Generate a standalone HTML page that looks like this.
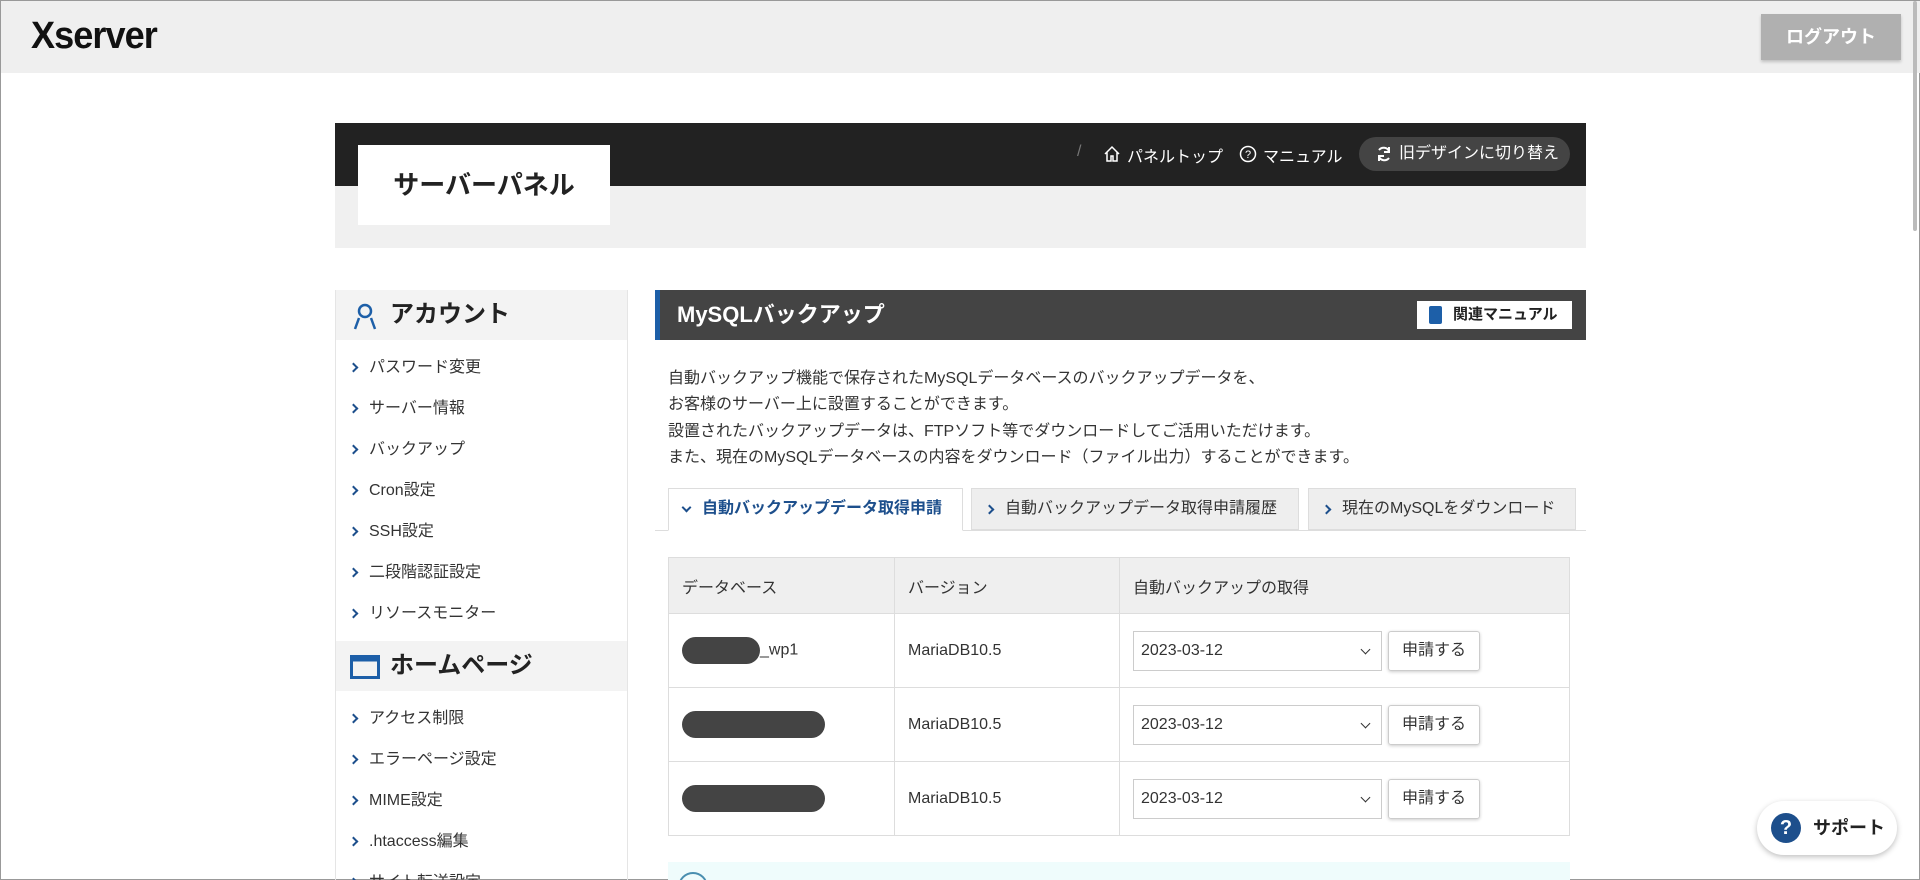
<!DOCTYPE html>
<html style="width:1920px;height:880px;overflow:hidden"><head><meta charset="utf-8"><style>
*{box-sizing:border-box;margin:0;padding:0}
body{width:1920px;height:880px;overflow:hidden;background:#fff;font-family:"Liberation Sans","Noto Sans CJK JP",sans-serif;color:#333;position:relative;border:1px solid #999}
.abs{position:absolute}
#hdr{left:0;top:0;width:1920px;height:72px;background:#efefef}
#logo{left:30px;top:14px;font-size:38px;font-weight:bold;color:#111;letter-spacing:-1px;transform:scaleX(0.95);transform-origin:left}
#logout{left:1760px;top:13px;width:140px;height:46px;background:#b0b0b0;color:#fff;font-size:18px;font-weight:bold;text-align:center;line-height:46px;box-shadow:0 2px 3px rgba(0,0,0,.2)}
#sb{left:1912px;top:0;width:4px;height:230px;background:#bbb;border-radius:2px}
#dark{left:334px;top:122px;width:1251px;height:63px;background:#222}
#light{left:334px;top:185px;width:1251px;height:62px;background:#f0f0f0}
#pbox{left:357px;top:144px;width:252px;height:80px;background:#fff;font-size:26px;font-weight:bold;color:#222;text-align:center;line-height:80px}
.nav{color:#fff;font-size:16px;top:142px}
#pill{left:1358px;top:136px;width:211px;height:34px;background:#444;border-radius:17px;color:#fff;font-size:16px;line-height:34px;padding-left:40px}
#side{left:334px;top:289px;width:293px;height:600px;border:1px solid #e5e5e5;border-top:none}
.sh{height:50px;background:#f3f3f3;font-size:24px;font-weight:bold;color:#222;line-height:50px;padding-left:54px;position:relative}
.si{height:41px;font-size:16px;line-height:41px;padding-left:33px;position:relative;color:#333}
.si:before,.tab:before{content:"";position:absolute;left:14px;top:17px;width:5px;height:5px;border-right:2px solid #1d4f8c;border-top:2px solid #1d4f8c;transform:rotate(45deg)}
#title{left:654px;top:289px;width:931px;height:50px;background:#444;border-left:5px solid #1d5fa8;color:#fff;font-size:22px;font-weight:bold;line-height:50px;padding-left:17px}
#rel{left:1416px;top:300px;width:155px;height:28px;background:#fff;color:#222;font-size:15px;font-weight:bold;line-height:28px;padding-left:36px}
#para{left:667px;top:365px;font-size:16px;line-height:26.4px;color:#333}
.tab{top:487px;height:42px;font-size:16px;line-height:40px;padding-left:33px;border:1px solid #ddd;background:#eee;position:absolute}
.tab.act:before{transform:rotate(135deg);top:15px}
#tabline{left:654px;top:529px;width:931px;height:1px;background:#ddd}
table{position:absolute;left:667px;top:556px;width:902px;border-collapse:collapse;font-size:16px}
td,th{border:1px solid #ddd;text-align:left;font-weight:normal;padding-left:13px}
th{background:#efefef;height:56px}
td{height:74px}
.sel{display:inline-block;width:249px;height:40px;border:1px solid #ccc;line-height:38px;padding-left:7px;position:relative;vertical-align:middle}
.sel:after{content:"";position:absolute;right:12px;top:14px;width:6px;height:6px;border-right:1.5px solid #333;border-bottom:1.5px solid #333;transform:rotate(45deg)}
.btn{display:inline-block;width:92px;height:40px;border:1px solid #ccc;border-radius:3px;text-align:center;line-height:38px;margin-left:6px;vertical-align:middle;box-shadow:0 1px 3px rgba(0,0,0,.2)}
.blob{display:inline-block;background:#444;border-radius:14px;height:27px;vertical-align:middle}
#info{left:667px;top:861px;width:902px;height:30px;background:#effcfc}
#sup{left:1756px;top:800px;width:140px;height:54px;background:#fff;border-radius:27px;box-shadow:0 2px 6px rgba(0,0,0,.25);font-size:18px;font-weight:bold;color:#222;line-height:54px;padding-left:56px}
#sup i{position:absolute;left:14px;top:12px;width:30px;height:30px;border-radius:50%;background:#1d4f8c;color:#fff;font-style:normal;text-align:center;line-height:30px;font-size:20px;padding:0}
</style></head><body>
<div id="hdr" class="abs"></div>
<div id="logo" class="abs">Xserver</div>
<div id="logout" class="abs">ログアウト</div>
<div id="sb" class="abs"></div>
<div id="dark" class="abs"></div>
<div id="light" class="abs"></div>
<div id="pbox" class="abs">サーバーパネル</div>
<div class="abs nav" style="left:1076px;color:#777">/</div>
<svg class="abs" style="left:1102px;top:144px" width="18" height="18" viewBox="0 0 18 18"><path d="M2 9L9 2l7 7M4 7v9h4v-5h2v5h4V7" fill="none" stroke="#fff" stroke-width="1.5"/></svg>
<div class="abs nav" style="left:1126px">パネルトップ</div>
<svg class="abs" style="left:1238px;top:144px" width="18" height="18" viewBox="0 0 18 18"><circle cx="9" cy="9" r="7.5" fill="none" stroke="#fff" stroke-width="1.5"/><text x="9" y="13" font-size="11" fill="#fff" text-anchor="middle" font-family="Liberation Sans">?</text></svg>
<div class="abs nav" style="left:1262px">マニュアル</div>
<div id="pill" class="abs">旧デザインに切り替え</div>
<svg class="abs" style="left:1374px;top:143px" width="18" height="20" viewBox="0 0 18 20"><path d="M4 6a6 6 0 0 1 10 1M14 14a6 6 0 0 1-10-1" fill="none" stroke="#fff" stroke-width="2"/><path d="M14 3v5h-5M4 17v-5h5" fill="none" stroke="#fff" stroke-width="2"/></svg>

<div id="side" class="abs">
<div class="sh"><svg style="position:absolute;left:16px;top:12px" width="26" height="28" viewBox="0 0 26 28"><circle cx="13" cy="9" r="6" fill="none" stroke="#1d5fa8" stroke-width="2.5"/><path d="M3 27l4-11M23 27l-4-11" stroke="#1d5fa8" stroke-width="2.5"/></svg>アカウント</div>
<div class="si" style="margin-top:7px">パスワード変更</div>
<div class="si">サーバー情報</div>
<div class="si">バックアップ</div>
<div class="si">Cron設定</div>
<div class="si">SSH設定</div>
<div class="si">二段階認証設定</div>
<div class="si">リソースモニター</div>
<div class="sh" style="margin-top:7px"><svg style="position:absolute;left:14px;top:14px" width="30" height="24" viewBox="0 0 30 24"><rect x="1.5" y="1.5" width="27" height="21" fill="none" stroke="#1d5fa8" stroke-width="3"/><rect x="1.5" y="1.5" width="27" height="5" fill="#1d5fa8"/></svg>ホームページ</div>
<div class="si" style="margin-top:7px">アクセス制限</div>
<div class="si">エラーページ設定</div>
<div class="si">MIME設定</div>
<div class="si">.htaccess編集</div>
<div class="si">サイト転送設定</div>
</div>

<div id="title" class="abs">MySQLバックアップ</div>
<div id="rel" class="abs"><span style="position:absolute;left:12px;top:5px;width:13px;height:18px;background:#1d5fa8;border-radius:2px"></span>関連マニュアル</div>
<div id="para" class="abs">自動バックアップ機能で保存されたMySQLデータベースのバックアップデータを、<br>お客様のサーバー上に設置することができます。<br>設置されたバックアップデータは、FTPソフト等でダウンロードしてご活用いただけます。<br>また、現在のMySQLデータベースの内容をダウンロード（ファイル出力）することができます。</div>
<div id="tabline" class="abs"></div>
<div class="tab act" style="left:667px;width:295px;background:#fff;border-bottom:1px solid #fff;color:#1d4f8c;font-weight:bold;height:43px">自動バックアップデータ取得申請</div>
<div class="tab" style="left:970px;width:328px">自動バックアップデータ取得申請履歴</div>
<div class="tab" style="left:1307px;width:268px">現在のMySQLをダウンロード</div>
<table>
<tr><th style="width:226px">データベース</th><th style="width:225px">バージョン</th><th>自動バックアップの取得</th></tr>
<tr><td><span class="blob" style="width:78px"></span>_wp1</td><td>MariaDB10.5</td><td><span class="sel">2023-03-12</span><span class="btn">申請する</span></td></tr>
<tr><td><span class="blob" style="width:143px"></span></td><td>MariaDB10.5</td><td><span class="sel">2023-03-12</span><span class="btn">申請する</span></td></tr>
<tr><td><span class="blob" style="width:143px"></span></td><td>MariaDB10.5</td><td><span class="sel">2023-03-12</span><span class="btn">申請する</span></td></tr>
</table>
<div id="info" class="abs"><span style="position:absolute;left:10px;top:10px;width:30px;height:30px;border:2px solid #4a8fb0;border-radius:50%"></span></div>
<div id="sup" class="abs"><i>?</i>サポート</div>
</body></html>
